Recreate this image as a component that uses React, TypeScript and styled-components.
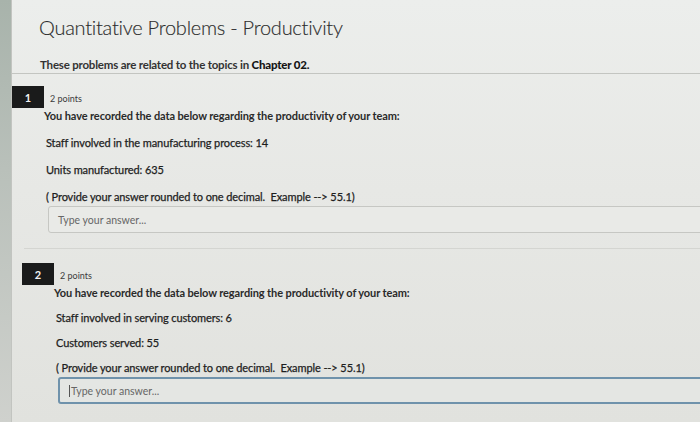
import React from "react";
import styled, { createGlobalStyle } from "styled-components";

const Global = createGlobalStyle`
  html, body { margin: 0; padding: 0; height: 100%; background: #e5e6e3; overflow: hidden; }
  #root { height: 100%; }
  body { font-family: Lato, "Open Sans", "Liberation Sans", sans-serif; color: #2a2a2a; }
`;

const Screen = styled.div`
  display: flex;
  width: 700px;
  height: 422px;
  overflow: hidden;
  background: linear-gradient(180deg, #eceeec 0%, #e7e8e5 45%, #e1e2de 100%);
`;

const Rail = styled.div`
  flex: none;
  width: 11px;
  background: linear-gradient(180deg, #a8b3ab 0%, #b9c0ba 40%, #cfd1cd 100%);
  border-right: 1px solid #c2c4c0;
`;

const Main = styled.main`
  flex: 1;
  min-width: 0;
  display: flex;
  flex-direction: column;
`;

const Header = styled.header`
  padding: 15px 0 0 27px;
`;

const Title = styled.h1`
  margin: 0;
  font-size: 20px;
  line-height: 24px;
  font-weight: 300;
  color: #2e2e2e;
  letter-spacing: -0.25px;
  -webkit-text-stroke: 0.15px #2e2e2e;
`;

const Intro = styled.p`
  margin: 18px 0 0 1px;
  font-size: 11.5px;
  line-height: 16px;
  font-weight: 700;
  color: #333;
  letter-spacing: -0.2px;
  strong { font-weight: 900; color: #151515; }
`;

const Rule = styled.hr<{ $inset: number; $tone: string; $before: number; $after: number }>`
  margin: ${(p) => p.$before}px 0 ${(p) => p.$after}px ${(p) => p.$inset}px;
  border: 0;
  height: 1px;
  background: ${(p) => p.$tone};
`;

const Question = styled.section<{ $shift: number }>`
  display: flex;
  flex-direction: column;
  margin-left: ${(p) => p.$shift}px;
`;

const QHead = styled.div`
  display: flex;
  align-items: center;
  gap: 6px;
  height: 22px;
`;

const Badge = styled.div`
  width: 32px;
  height: 22px;
  display: flex;
  align-items: center;
  justify-content: center;
  background: #1a1b1b;
  color: #f2f2f2;
  font-size: 11px;
  font-weight: 700;
`;

const Points = styled.span`
  font-size: 9px;
  color: #3c3c3c;
  margin-top: 2px;
`;

const Body = styled.div<{ $gap: number }>`
  display: flex;
  flex-direction: column;
  gap: ${(p) => p.$gap - 16}px;
  padding-left: 34px;
`;

const Line = styled.p`
  margin: 0;
  font-size: 11px;
  line-height: 16px;
  font-weight: 400;
  color: #1e1e1e;
  letter-spacing: -0.1px;
  white-space: nowrap;
  -webkit-text-stroke: 0.25px #1e1e1e;
`;

const Lead = styled(Line)`
  margin-left: -2px;
  font-weight: 700;
  -webkit-text-stroke: 0;
  color: #2a2a2a;
`;

const Field = styled.div<{ $active?: boolean }>`
  margin: 1px -20px 0 2px;
  height: 27px;
  box-sizing: border-box;
  display: flex;
  align-items: center;
  padding-left: 9px;
  border-radius: 3px;
  border: ${(p) => (p.$active ? "2px solid #6f92ab" : "1px solid #c6c7c3")};
  background: ${(p) => (p.$active ? "#e4e6e3" : "#e9eae7")};
  font-size: 10.5px;
  color: #666;
`;

const Caret = styled.span`
  display: inline-block;
  width: 1px;
  height: 12px;
  background: #555;
  margin-right: 1px;
`;

type Q = {
  n: number;
  shift: number;
  gap: number;
  lines: string[];
  active?: boolean;
};

const questions: Q[] = [
  {
    n: 1,
    shift: 0,
    gap: 27,
    lines: ["Staff involved in the manufacturing process: 14", "Units manufactured: 635"],
  },
  {
    n: 2,
    shift: 10,
    gap: 25,
    lines: ["Staff involved in serving customers: 6", "Customers served: 55"],
    active: true,
  },
];

export default function App() {
  return (
    <>
      <Global />
      <Screen>
        <Rail />
        <Main>
          <Header>
            <Title>Quantitative Problems - Productivity</Title>
            <Intro>
              These problems are related to the topics in <strong>Chapter 02.</strong>
            </Intro>
          </Header>
          <Rule $inset={0} $tone="#c3c5c1" $before={0} $after={12} />
          {questions.map((q, i) => (
            <React.Fragment key={q.n}>
              <Question $shift={q.shift}>
                <QHead>
                  <Badge>{q.n}</Badge>
                  <Points>2 points</Points>
                </QHead>
                <Body $gap={q.gap}>
                  <Lead>You have recorded the data below regarding the productivity of your team:</Lead>
                  {q.lines.map((l) => (
                    <Line key={l}>{l}</Line>
                  ))}
                  <Line>( Provide your answer rounded to one decimal.&nbsp; Example --&gt; 55.1)</Line>
                </Body>
                <Body $gap={q.gap}>
                  <Field $active={q.active}>
                    {q.active && <Caret />}
                    Type your answer...
                  </Field>
                </Body>
              </Question>
              {i === 0 && <Rule $inset={12} $tone="#d4d5d1" $before={15} $after={14} />}
            </React.Fragment>
          ))}
        </Main>
      </Screen>
    </>
  );
}
